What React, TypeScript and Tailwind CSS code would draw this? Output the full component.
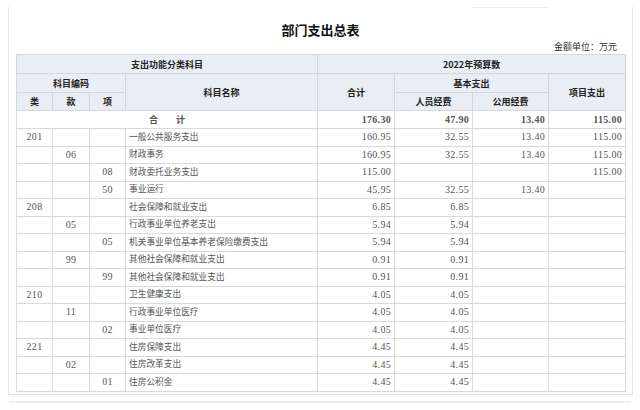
const rows: string[][] = [
  ['201', '', '', '一般公共服务支出', '160.95', '32.55', '13.40', '115.00'],
  ['', '06', '', '财政事务', '160.95', '32.55', '13.40', '115.00'],
  ['', '', '08', '财政委托业务支出', '115.00', '', '', '115.00'],
  ['', '', '50', '事业运行', '45.95', '32.55', '13.40', ''],
  ['208', '', '', '社会保障和就业支出', '6.85', '6.85', '', ''],
  ['', '05', '', '行政事业单位养老支出', '5.94', '5.94', '', ''],
  ['', '', '05', '机关事业单位基本养老保险缴费支出', '5.94', '5.94', '', ''],
  ['', '99', '', '其他社会保障和就业支出', '0.91', '0.91', '', ''],
  ['', '', '99', '其他社会保障和就业支出', '0.91', '0.91', '', ''],
  ['210', '', '', '卫生健康支出', '4.05', '4.05', '', ''],
  ['', '11', '', '行政事业单位医疗', '4.05', '4.05', '', ''],
  ['', '', '02', '事业单位医疗', '4.05', '4.05', '', ''],
  ['221', '', '', '住房保障支出', '4.45', '4.45', '', ''],
  ['', '02', '', '住房改革支出', '4.45', '4.45', '', ''],
  ['', '', '01', '住房公积金', '4.45', '4.45', '', ''],
];

const cjk = "font-['Noto_Sans_CJK_SC',sans-serif]";
const num = "font-['Liberation_Serif',serif] text-[10px] tracking-[0.3px]";
const th = 'border border-[#d6d6d6] bg-[#e9eef4] text-center font-bold text-[#222] p-0';
const td = 'border border-[#d9d9d9] p-0 text-[#555]';

export default function App() {
  return (
    <div className={`w-[640px] h-[410px] bg-white pt-[7px] ${cjk}`}>
      <div className="ml-[8px] w-[625px] border-x border-b border-[#e4e4e4] px-[7px] pb-[2px]">
        <div className="ml-[456px] w-[76px] h-px bg-[#ececec]" />
        <div className="mt-[12px] h-[20px] leading-[20px] text-center text-[13px] font-bold text-[#111]">
          部门支出总表
        </div>
        <div className="h-[14px] leading-[14px] text-right pr-[8px] text-[9px] text-[#333]">
          金额单位：万元
        </div>
        <table className="w-[609px] table-fixed border-collapse text-[9px] leading-none">
          <colgroup>
            <col className="w-[36px]" />
            <col className="w-[37px]" />
            <col className="w-[36px]" />
            <col className="w-[192px]" />
            <col className="w-[77px]" />
            <col className="w-[78px]" />
            <col className="w-[76px]" />
            <col className="w-[77px]" />
          </colgroup>
          <thead>
            <tr className="h-[19px]">
              <th colSpan={4} className={th}>支出功能分类科目</th>
              <th colSpan={4} className={th}>2022年预算数</th>
            </tr>
            <tr className="h-[19px]">
              <th colSpan={3} className={th}>科目编码</th>
              <th rowSpan={2} className={th}>科目名称</th>
              <th rowSpan={2} className={th}>合计</th>
              <th colSpan={2} className={th}>基本支出</th>
              <th rowSpan={2} className={th}>项目支出</th>
            </tr>
            <tr className="h-[18px]">
              <th className={th}>类</th>
              <th className={th}>款</th>
              <th className={th}>项</th>
              <th className={th}>人员经费</th>
              <th className={th}>公用经费</th>
            </tr>
          </thead>
          <tbody>
            <tr className="h-[18px]">
              <td colSpan={4} className={`${td} text-center font-bold text-[#222]`}>
                合　　计
              </td>
              {['176.30', '47.90', '13.40', '115.00'].map((v, i) => (
                <td key={i} className={`${td} ${num} text-right pr-[3px] font-bold text-[#222]`}>
                  {v}
                </td>
              ))}
            </tr>
            {rows.map((r, i) => (
              <tr key={i} className="h-[17.5px]">
                {r.slice(0, 3).map((c, j) => (
                  <td key={j} className={`${td} ${num} text-center`}>
                    {c}
                  </td>
                ))}
                <td className={`${td} pl-[3px] whitespace-nowrap text-[8.7px] text-[#333]`}>{r[3]}</td>
                {r.slice(4).map((v, j) => (
                  <td key={j} className={`${td} ${num} text-right pr-[3px]`}>
                    {v}
                  </td>
                ))}
              </tr>
            ))}
          </tbody>
        </table>
      </div>
      <div className="ml-[9px] mt-[6px] w-[622px] h-[2px] bg-[#eaeef3]" />
    </div>
  );
}
